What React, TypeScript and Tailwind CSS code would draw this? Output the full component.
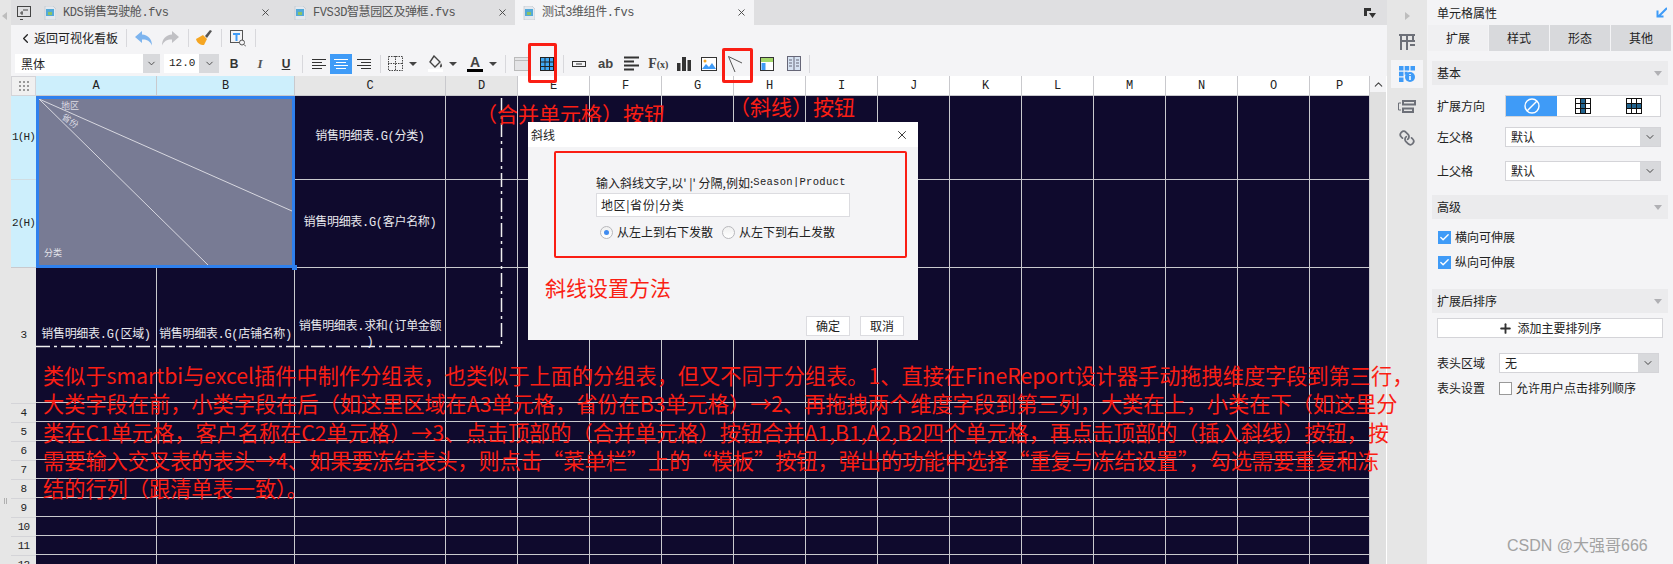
import { Check, ChevronDown, ChevronLeft, ChevronUp, Link, Plus, X } from 'lucide-react';

const colHeads = ['A', 'B', 'C', 'D', 'E', 'F', 'G', 'H', 'I', 'J', 'K', 'L', 'M', 'N', 'O', 'P'];
const plainCols = colHeads.slice(3);
const lowerRows = ['4', '5', '6', '7', '8', '9', '10', '11', '12'];
const noteLines = [
  '类似于smartbi与excel插件中制作分组表，也类似于上面的分组表，但又不同于分组表。1、直接在FineReport设计器手动拖拽维度字段到第三行，',
  '大类字段在前，小类字段在后（如这里区域在A3单元格，省份在B3单元格）→2、再拖拽两个维度字段到第三列，大类在上，小类在下（如这里分',
  '类在C1单元格，客户名称在C2单元格）→3、点击顶部的（合并单元格）按钮合并A1,B1,A2,B2四个单元格，再点击顶部的（插入斜线）按钮，按',
  '需要输入交叉表的表头→4、如果要冻结表头，则点击“菜单栏”上的“模板”按钮，弹出的功能中选择“重复与冻结设置”，勾选需要重复和冻',
  '结的行列（跟清单表一致）。',
];

const cellLine = 'border-r border-b border-[#c9c9cd]';
const cellText = "text-[12px] leading-[15px] text-[#e8e8ee] font-['Liberation_Mono','Noto_Sans_CJK_SC',monospace] tracking-[-0.3px] whitespace-nowrap";
const rowLabel = "flex items-center justify-center font-['Liberation_Mono',monospace] text-[11px] tracking-[-0.8px] text-[#222]";

function FileIcon() {
  return (
    <svg width="12" height="14" viewBox="0 0 12 14">
      <path d="M1 0h8l3 3v11H1z" fill="#e4e8ee" stroke="#b9c0c8" strokeWidth="0.6" />
      <rect x="2" y="3" width="8" height="7" fill="#52a9d8" />
      <rect x="4" y="6" width="4" height="3" fill="#8cc265" />
    </svg>
  );
}

function Tab({ name, active, className }: { name: string; active?: boolean; className: string }) {
  return (
    <div className={`flex h-full items-center ${className} ${active ? 'bg-[#f4f4f6]' : ''}`}>
      <FileIcon />
      <span className="ml-[7px] flex-1 font-['Liberation_Mono','Noto_Sans_CJK_SC',monospace] text-[12px] tracking-[-0.4px] text-[#555]">{name}</span>
      <X size={11} className="mr-[7px] text-[#444]" strokeWidth={2} />
    </div>
  );
}

function Sep({ className }: { className: string }) {
  return <div className={`h-[18px] w-px bg-[#d8d8dc] ${className}`} />;
}

function Caret({ className }: { className: string }) {
  return <div className={`h-0 w-0 border-x-[4px] border-t-[4px] border-x-transparent border-t-[#444] ${className}`} />;
}

function AlignIcon({ white, mode }: { white?: boolean; mode: 'l' | 'c' | 'r' }) {
  const stroke = white ? '#fff' : '#333';
  const x = mode === 'l' ? 0 : mode === 'c' ? 2 : 4;
  return (
    <svg width="14" height="12" viewBox="0 0 14 12" stroke={stroke} strokeWidth="1">
      <path d={`M0 1.5h14M${x} 4.5h10M0 7.5h14M${x} 10.5h10`} />
    </svg>
  );
}

function TableIcon({ className }: { className?: string }) {
  return (
    <svg width="14" height="14" viewBox="0 0 14 14" className={className}>
      <rect x="0.5" y="0.5" width="13" height="13" fill="#3fa9f5" stroke="#222" />
      <path d="M0 5h14M0 9.5h14M5 0v14M9.5 0v14" stroke="#222" strokeWidth="1" />
    </svg>
  );
}

function SectionHead({ title }: { title: string }) {
  return (
    <div className="mx-[5px] flex h-[24px] items-center justify-between bg-[#ebebed] px-[5px]">
      <span className="text-[12px] text-[#222]">{title}</span>
      <div className="mr-[1px] h-0 w-0 border-x-[4px] border-t-[5px] border-x-transparent border-t-[#b0b0b4]" />
    </div>
  );
}

function PanelSelect({ value, className }: { value: string; className: string }) {
  return (
    <div className={`flex h-[20px] items-center border border-[#d4d4d8] bg-white ${className}`}>
      <span className="flex-1 pl-[5px] text-[12px] text-[#222]">{value}</span>
      <div className="flex h-full w-[20px] items-center justify-center bg-[#d8d9dc]">
        <ChevronDown size={12} className="text-[#444]" />
      </div>
    </div>
  );
}

function CheckRow({ label }: { label: string }) {
  return (
    <div className="ml-[11px] flex h-[14px] items-center gap-[4px]">
      <div className="flex h-[13px] w-[13px] items-center justify-center bg-[#3f9bf7]">
        <Check size={11} strokeWidth={3} className="text-white" />
      </div>
      <span className="text-[12px] text-[#222]">{label}</span>
    </div>
  );
}

function Radio({ on }: { on?: boolean }) {
  return (
    <div className="flex h-[13px] w-[13px] items-center justify-center rounded-full border border-[#b8b8bc] bg-gradient-to-b from-[#f0f0f0] to-white">
      {on && <div className="h-[5px] w-[5px] rounded-full bg-[#3f8bf0]" />}
    </div>
  );
}

function Sheet() {
  return (
    <div className="flex flex-1 overflow-hidden">
      <div className="grid flex-1 grid-cols-[25px_121px_138px_151px_repeat(12,72px)_60px] grid-rows-[20px_84px_88px_135px_repeat(9,19px)] content-start bg-[#0f0a2d]">
        <div className="flex items-center justify-center border border-[#d4d4d8] bg-[#f0f0f0]">
          <div className="grid grid-cols-3 gap-[2px]">
            {Array.from({ length: 9 }).map((_, i) => (
              <div key={i} className="h-[2px] w-[2px] bg-[#999]" />
            ))}
          </div>
        </div>
        {colHeads.map((c, i) => (
          <div
            key={c}
            className={`flex items-center justify-center border-r border-b border-[#c9c9cd] font-['Liberation_Mono',monospace] text-[12px] text-[#222] ${i < 2 ? 'bg-[#cdeffc]' : i < 4 ? 'bg-[#e6e6e6]' : 'bg-white'}`}
          >
            {c}
          </div>
        ))}

        {/* row 1 */}
        <div className={`border-b border-[#d0dde2] bg-[#cdeffc] ${rowLabel}`}>1(H)</div>
        <div className="relative col-span-2 row-span-2 border-[3px] border-[#2f80ed] bg-[#787b94]">
          <svg className="absolute inset-0 h-full w-full" viewBox="0 0 253 166" preserveAspectRatio="none">
            <path d="M0 0L253 112M0 0L169 166" stroke="#d8d8e0" strokeWidth="1" fill="none" />
          </svg>
          <span className="absolute top-[0px] left-[22px] text-[9px] leading-[14px] text-[#dcdce4]">地区</span>
          <span className="absolute top-[15px] left-[22px] rotate-[35deg] text-[9px] leading-[14px] text-[#dcdce4]">省份</span>
          <span className="absolute bottom-[5px] left-[5px] text-[9px] leading-[14px] text-[#e4e4ea]">分类</span>
          <div className="absolute right-[-5px] bottom-[-5px] h-[5px] w-[5px] bg-[#2f80ed]" />
        </div>
        <div className={`flex items-center justify-center ${cellLine} ${cellText}`}>销售明细表.G(分类)</div>
        {plainCols.map((c) => (
          <div key={c} className={cellLine} />
        ))}

        {/* row 2 */}
        <div className={`border-b border-[#c9c9cd] bg-[#cdeffc] ${rowLabel}`}>2(H)</div>
        <div className={`flex items-center justify-center ${cellLine} ${cellText}`}>销售明细表.G(客户名称)</div>
        {plainCols.map((c) => (
          <div key={c} className={cellLine} />
        ))}

        {/* row 3 */}
        <div className={`bg-[#e6e6e6] ${rowLabel}`}>3</div>
        <div className={`flex items-center justify-center ${cellLine} ${cellText}`}>销售明细表.G(区域)</div>
        <div className={`flex items-center justify-center ${cellLine} ${cellText}`}>销售明细表.G(店铺名称)</div>
        <div className={`flex flex-col items-center justify-center ${cellLine} ${cellText}`}>
          <span>销售明细表.求和(订单金额</span>
          <span>)</span>
        </div>
        {plainCols.map((c) => (
          <div key={c} className={cellLine} />
        ))}

        {lowerRows.flatMap((r) => [
          <div key={r} className={`border-t border-[#d4d4d8] bg-[#e6e6e6] ${rowLabel}`}>{r}</div>,
          ...colHeads.map((c) => <div key={r + c} className={cellLine} />),
        ])}
      </div>
      <div className="flex w-[17px] flex-col border-r border-white bg-[#e0e0e0]">
        <div className="flex h-[16px] items-center justify-center bg-[#f4f4f6]">
          <ChevronUp size={13} className="text-[#444]" />
        </div>
      </div>
    </div>
  );
}

function Toolbar() {
  return (
    <div className="flex h-[51px] flex-col bg-[#f4f4f6]">
      <div className="flex h-[26px] items-center pl-[7px]">
        <ChevronLeft size={15} strokeWidth={2} className="text-[#222]" />
        <span className="ml-[1px] text-[12px] text-[#222]">返回可视化看板</span>
        <Sep className="ml-[8px]" />
        <svg width="18" height="15" viewBox="0 0 18 15" className="ml-[8px]">
          <path d="M7 0L0 6l7 6V8.5c4-.3 8 1 10 6C17 8 13 4 7 3.5z" fill="#7db4ee" />
        </svg>
        <svg width="18" height="15" viewBox="0 0 18 15" className="ml-[8px] -scale-x-100">
          <path d="M7 0L0 6l7 6V8.5c4-.3 8 1 10 6C17 8 13 4 7 3.5z" fill="#c0c0c4" />
        </svg>
        <Sep className="ml-[9px]" />
        <svg width="17" height="16" viewBox="0 0 17 16" className="ml-[6px]">
          <path d="M1 9l7-4 4 4-3 6C5 15 2 13 1 9z" fill="#f5a623" />
          <path d="M10 6l5-6 2 1-5 7z" fill="#555" />
        </svg>
        <Sep className="ml-[9px]" />
        <svg width="16" height="17" viewBox="0 0 16 17" className="ml-[8px]">
          <rect x="0.5" y="0.5" width="12" height="12" fill="none" stroke="#555" />
          <path d="M3 3h7v2H7.5v6h-2V5H3z" fill="#3f9bf7" />
          <circle cx="12" cy="12.5" r="2.5" fill="#f4f4f6" stroke="#555" />
          <path d="M14 14.5l2 2" stroke="#555" />
        </svg>
        <Sep className="ml-[9px]" />
      </div>
      <div className="flex h-[25px] items-center pl-[4px]">
        <div className="flex h-[19px] w-[145px] items-center bg-white">
          <span className="flex-1 pl-[6px] text-[12px] text-[#222]">黑体</span>
          <div className="flex h-full w-[17px] items-center justify-center bg-[#d8d9dc]">
            <ChevronDown size={11} className="text-[#444]" />
          </div>
        </div>
        <div className="ml-[4px] flex h-[19px] w-[55px] items-center bg-white">
          <span className="flex-1 pl-[5px] font-['Liberation_Mono',monospace] text-[11px] text-[#222]">12.0</span>
          <div className="flex h-full w-[20px] items-center justify-center bg-[#d8d9dc]">
            <ChevronDown size={11} className="text-[#444]" />
          </div>
        </div>
        <span className="ml-[10px] w-[10px] text-center font-['Liberation_Sans',sans-serif] text-[12px] font-bold text-[#333]">B</span>
        <span className="ml-[16px] w-[10px] text-center font-['Liberation_Serif',serif] text-[13px] font-bold text-[#555] italic">I</span>
        <span className="ml-[16px] w-[10px] text-center font-['Liberation_Sans',sans-serif] text-[12px] font-bold text-[#333] underline">U</span>
        <Sep className="ml-[11px]" />
        <div className="ml-[9px] flex w-[14px]">
          <AlignIcon mode="l" />
        </div>
        <div className="ml-[4px] flex h-[20px] w-[22px] items-center justify-center bg-[#3f9bf7]">
          <AlignIcon white mode="c" />
        </div>
        <div className="ml-[5px] flex w-[14px]">
          <AlignIcon mode="r" />
        </div>
        <Sep className="ml-[9px]" />
        <svg width="15" height="15" viewBox="0 0 15 15" className="ml-[7px]">
          <path d="M.5.5h14v14H.5zM7.5 0v15M0 7.5h15" fill="none" stroke="#444" strokeDasharray="1.5 1" />
        </svg>
        <Caret className="ml-[6px]" />
        <svg width="15" height="17" viewBox="0 0 15 17" className="ml-[11px]">
          <path d="M6 1l6 6-5 5-5-5z" fill="none" stroke="#444" strokeWidth="1.4" />
          <path d="M13 8c1 2 1.5 3 .5 4s-2 0-1.5-1z" fill="#444" />
          <rect y="14" width="15" height="3" fill="#fff" />
        </svg>
        <Caret className="ml-[6px]" />
        <div className="ml-[10px] flex w-[16px] flex-col items-center">
          <span className="font-['Liberation_Sans',sans-serif] text-[14px] leading-[14px] font-bold text-[#444]">A</span>
          <div className="h-[3px] w-[16px] bg-black" />
        </div>
        <Caret className="ml-[6px]" />
        <Sep className="ml-[8px]" />
        <svg width="15" height="14" viewBox="0 0 15 14" className="ml-[8px]">
          <rect x="0.5" y="0.5" width="14" height="13" fill="#e4e4e6" stroke="#bbb" />
          <path d="M0 3.5h15" stroke="#bbb" />
        </svg>
        <TableIcon className="ml-[11px]" />
        <Sep className="ml-[9px]" />
        <svg width="14" height="6" viewBox="0 0 14 6" className="ml-[8px]">
          <rect x="0.5" y="0.5" width="13" height="5" fill="none" stroke="#333" />
          <path d="M4 3h6" stroke="#333" />
        </svg>
        <span className="ml-[12px] font-['Liberation_Sans',sans-serif] text-[13px] font-bold text-[#444]">ab</span>
        <svg width="15" height="15" viewBox="0 0 15 15" className="ml-[11px]" stroke="#333" strokeWidth="2">
          <path d="M0 1.5h15M0 5.5h10M0 9.5h15M0 13.5h10" />
        </svg>
        <span className="ml-[9px] font-['Liberation_Serif',serif] text-[14px] font-bold text-[#444]">F<span className="text-[10px]">(x)</span></span>
        <svg width="14" height="14" viewBox="0 0 14 14" className="ml-[9px]" fill="#333">
          <path d="M0 6h3.5v8H0zM5 0h4v14H5zM10.500 3H14v11h-3.500z" />
        </svg>
        <svg width="16" height="14" viewBox="0 0 16 14" className="ml-[10px]">
          <rect x="0.5" y="0.5" width="15" height="13" fill="#fff" stroke="#333" />
          <path d="M1 12l4-5 3 3 3-4 4 6z" fill="#3f9bf7" />
          <circle cx="4" cy="4" r="1.500" fill="#f5a623" />
        </svg>
        <svg width="14" height="16" viewBox="0 0 14 16" className="ml-[11px]" fill="none" stroke="#555">
          <path d="M.5.5L14 7M.5.5L7 16" />
        </svg>
        <svg width="14" height="14" viewBox="0 0 14 14" className="ml-[18px]">
          <rect x="0.5" y="0.5" width="13" height="13" fill="#fff" stroke="#333" />
          <rect x="1" y="1" width="12" height="4" fill="#a4d86a" />
          <rect x="1.500" y="6" width="4" height="7" fill="#3f9bf7" />
        </svg>
        <svg width="14" height="15" viewBox="0 0 14 15" className="ml-[13px]">
          <rect x="0.5" y="0.5" width="13" height="14" fill="#d6e2f2" stroke="#667" />
          <path d="M7 1v13M2 4h3M2 7h3M2 10h3M9 4h3M9 7h3M9 10h3" stroke="#667" />
        </svg>
        <Sep className="ml-[8px]" />
      </div>
    </div>
  );
}

function SideBar() {
  return (
    <div className="flex w-[40px] flex-col items-center bg-[#e6e6e6] pt-[12px]">
      <div className="h-0 w-0 border-y-[4px] border-l-[5px] border-y-transparent border-l-[#bdbdbd]" />
      <svg width="16" height="16" viewBox="0 0 16 16" className="mt-[14px]" fill="none" stroke="#6d7078" strokeWidth="2">
        <path d="M0 1h16M2 1v15M8 1v15M14 1v6M2 7h14M11 11h5" />
      </svg>
      <div className="mt-[10px] flex h-[28px] w-[32px] items-center justify-center bg-[#f4f4f6]">
        <svg width="16" height="16" viewBox="0 0 16 16">
          <path d="M0 0h4.500v4.500H0zM5.700 0h4.500v4.500H5.700zM11.500 0H16v4.500h-4.500zM0 5.700h4.500v4.500H0zM0 11.500h4.500V16H0zM5.700 5.700h3v3h-3z" fill="#3f9bf7" />
          <circle cx="11" cy="11" r="5" fill="#3f9bf7" />
          <path d="M11 10v4M11 8v1" stroke="#fff" strokeWidth="1.500" />
        </svg>
      </div>
      <svg width="18" height="13" viewBox="0 0 18 13" className="mt-[12px]" fill="none" stroke="#6d7078">
        <rect x="5" y="1" width="12" height="3.500" strokeWidth="2" />
        <rect x="5" y="8.500" width="10" height="3.500" strokeWidth="2" />
        <path d="M3 3H.5v7H3" />
      </svg>
      <Link size={16} strokeWidth={2.6} className="mt-[17px] rotate-90 text-[#6d7078]" />
    </div>
  );
}

function Panel() {
  return (
    <div className="flex w-[246px] flex-col bg-[#f4f4f6]">
      <div className="flex h-[25px] items-center justify-between pr-[6px] pl-[10px]">
        <span className="text-[12px] text-[#222]">单元格属性</span>
        <svg width="11" height="11" viewBox="0 0 11 11">
          <path d="M11 1L3 9M1.500 3.500v6h6" stroke="#3f9bf7" strokeWidth="2" fill="none" />
        </svg>
      </div>
      <div className="flex h-[26px] gap-px pl-px text-[12px] text-[#222]">
        <div className="flex w-[60px] items-center justify-center bg-[#f0f0f2]">扩展</div>
        <div className="flex w-[60px] items-center justify-center bg-[#d8d9dc]">样式</div>
        <div className="flex w-[60px] items-center justify-center bg-[#d8d9dc]">形态</div>
        <div className="flex w-[60px] items-center justify-center bg-[#d8d9dc]">其他</div>
      </div>
      <div className="mt-[10px]">
        <SectionHead title="基本" />
      </div>
      <div className="mt-[10px] flex items-center pl-[10px]">
        <span className="w-[68px] text-[12px] text-[#222]">扩展方向</span>
        <div className="flex h-[22px] w-[156px] border border-[#d4d4d8] bg-white">
          <div className="flex w-[51px] items-center justify-center bg-[#3f9bf7]">
            <svg width="16" height="16" viewBox="0 0 16 16" fill="none" stroke="#fff" strokeWidth="1.400">
              <circle cx="8" cy="8" r="7" />
              <path d="M3 13L13 3" />
            </svg>
          </div>
          <div className="flex w-[51px] items-center justify-center">
            <svg width="16" height="16" viewBox="0 0 16 16" fill="none" stroke="#111">
              <rect x="5.500" y="0.500" width="5" height="15" fill="#22648f" />
              <rect x="0.500" y="0.500" width="15" height="15" />
              <path d="M0 5.500h16M0 10.500h16M5.500 0v16M10.500 0v16" />
            </svg>
          </div>
          <div className="flex w-[51px] items-center justify-center">
            <svg width="16" height="16" viewBox="0 0 16 16" fill="none" stroke="#111">
              <rect x="0.500" y="5.500" width="15" height="5" fill="#22648f" />
              <rect x="0.500" y="0.500" width="15" height="15" />
              <path d="M0 5.500h16M0 10.500h16M5.500 0v16M10.500 0v16" />
            </svg>
          </div>
        </div>
      </div>
      <div className="mt-[10px] flex items-center pl-[10px]">
        <span className="w-[68px] text-[12px] text-[#222]">左父格</span>
        <PanelSelect value="默认" className="w-[156px]" />
      </div>
      <div className="mt-[14px] flex items-center pl-[10px]">
        <span className="w-[68px] text-[12px] text-[#222]">上父格</span>
        <PanelSelect value="默认" className="w-[156px]" />
      </div>
      <div className="mt-[14px]">
        <SectionHead title="高级" />
      </div>
      <div className="mt-[11px] flex flex-col gap-[11px]">
        <CheckRow label="横向可伸展" />
        <CheckRow label="纵向可伸展" />
      </div>
      <div className="mt-[20px]">
        <SectionHead title="扩展后排序" />
      </div>
      <div className="mx-[10px] mt-[5px] flex h-[20px] items-center justify-center gap-[4px] border border-[#d4d4d8] bg-white text-[12px] text-[#222]">
        <Plus size={15} strokeWidth={3} className="text-[#333]" />
        添加主要排列序
      </div>
      <div className="mt-[15px] flex items-center pl-[10px]">
        <span className="w-[62px] text-[12px] text-[#222]">表头区域</span>
        <PanelSelect value="无" className="w-[160px]" />
      </div>
      <div className="mt-[6px] flex items-center pl-[10px]">
        <span className="w-[62px] text-[12px] text-[#222]">表头设置</span>
        <div className="h-[13px] w-[13px] border border-[#999] bg-white" />
        <span className="ml-[4px] text-[12px] text-[#222]">允许用户点击排列顺序</span>
      </div>
    </div>
  );
}

function Dialog() {
  return (
    <div className="absolute top-[122px] left-[528px] flex h-[218px] w-[390px] flex-col bg-[#f4f4f6]">
      <div className="flex h-[25px] items-center justify-between bg-white pr-[9px] pl-[3px]">
        <span className="text-[12px] text-[#222]">斜线</span>
        <X size={14} strokeWidth={1.5} className="text-[#222]" />
      </div>
      <div className="flex flex-1 flex-col pt-[28px] pl-[68px]">
        <div className="flex h-[16px] items-center text-[12px] whitespace-pre text-[#222]">
          输入斜线文字,以' |' 分隔,例如:<span className="font-['Liberation_Mono',monospace] text-[10.500px] tracking-[0.3px]">Season|Product</span>
        </div>
        <div className="mt-[2px] flex h-[24px] w-[254px] items-center border border-[#dcdce0] bg-white pl-[4px] text-[12px] tracking-[0.6px] text-[#222]">地区|省份|分类</div>
        <div className="mt-[7px] flex h-[16px] items-center text-[12px] text-[#222]">
          <div className="ml-[4px]"><Radio on /></div>
          <span className="ml-[4px]">从左上到右下发散</span>
          <div className="ml-[9px]"><Radio /></div>
          <span className="ml-[4px]">从左下到右上发散</span>
        </div>
        <div className="mt-auto mr-[14px] mb-[4px] flex justify-end gap-[10px] text-[12px] text-[#222]">
          <div className="flex h-[20px] w-[44px] items-center justify-center border border-[#dcdce0] bg-white">确定</div>
          <div className="flex h-[20px] w-[44px] items-center justify-center border border-[#dcdce0] bg-white">取消</div>
        </div>
      </div>
      <div className="absolute top-[29px] left-[26px] h-[107px] w-[353px] rounded-[2px] border-2 border-[#fa1e14]" />
      <span className="absolute top-[152px] left-[17px] text-[21px] leading-[26px] whitespace-nowrap text-[#fa1e14]">斜线设置方法</span>
    </div>
  );
}

export default function App() {
  return (
    <div className="relative flex h-[564px] w-[1673px] overflow-hidden bg-[#e0e0e0] font-['Noto_Sans_CJK_SC',sans-serif]">
      <div className="flex w-[11px] flex-col items-start bg-[#e6e6e6] pt-[12px] pl-[2px]">
        <div className="h-0 w-0 border-y-[4px] border-r-[5px] border-y-transparent border-r-[#bdbdbd]" />
        <div className="mt-[478px] ml-[2px] h-[6px] w-[3px] border-x border-[#b0b0b0]" />
      </div>
      <div className="flex w-[1376px] flex-col">
        <div className="flex h-[25px] items-center bg-[#dfdfe1]">
          <svg width="15" height="14" viewBox="0 0 15 14" className="mx-[5px]" fill="none" stroke="#444">
            <rect x="1.500" y="0.500" width="13" height="10" />
            <path d="M4 13.500h3M7 4h5M4 7h3M6 5v4" />
          </svg>
          <Tab name="KDS销售驾驶舱.fvs" className="w-[242px] pl-[8px]" />
          <Tab name="FVS3D智慧园区及弹框.fvs" className="w-[237px] pl-[16px]" />
          <Tab name="测试3维组件.fvs" active className="w-[239px] pl-[8px]" />
          <div className="flex-1" />
          <svg width="12" height="10" viewBox="0 0 12 10" className="mr-[11px]" fill="#333">
            <path d="M0 0h7v3H3v5H0zM5 5h7L8.500 10z" />
          </svg>
        </div>
        <Toolbar />
        <Sheet />
      </div>
      <SideBar />
      <Panel />

      {/* dash-dot frame around the cross table */}
      <svg className="absolute top-[96px] left-[36px]" width="468" height="252" fill="none" stroke="#f0f0f0" strokeWidth="1.500">
        <path d="M0 250.500H465.500V0" strokeDasharray="14 4 3 4" />
      </svg>

      {/* red annotations */}
      <div className="absolute top-[43px] left-[528px] h-[40px] w-[29px] rounded-[2px] border-[3px] border-[#fa1e14]" />
      <div className="absolute top-[48px] left-[722px] h-[35px] w-[31px] rounded-[2px] border-[3px] border-[#fa1e14]" />
      <span className="absolute top-[100px] left-[476px] text-[21px] leading-[26px] whitespace-nowrap text-[#fa1e14]">（合并单元格）按钮</span>
      <span className="absolute top-[93px] left-[729px] text-[21px] leading-[26px] whitespace-nowrap text-[#fa1e14]">（斜线）按钮</span>
      <Dialog />
      <div className="absolute top-[361px] left-[43px] text-[21.200px] leading-[28.300px] whitespace-nowrap text-[#fa1e14]">
        {noteLines.map((line) => (
          <p key={line}>{line}</p>
        ))}
      </div>
      <span className="absolute top-[534px] left-[1507px] font-['Liberation_Sans','Noto_Sans_CJK_SC',sans-serif] text-[16px] leading-[24px] whitespace-nowrap text-[#a2a2a2]">CSDN @大强哥666</span>
    </div>
  );
}
